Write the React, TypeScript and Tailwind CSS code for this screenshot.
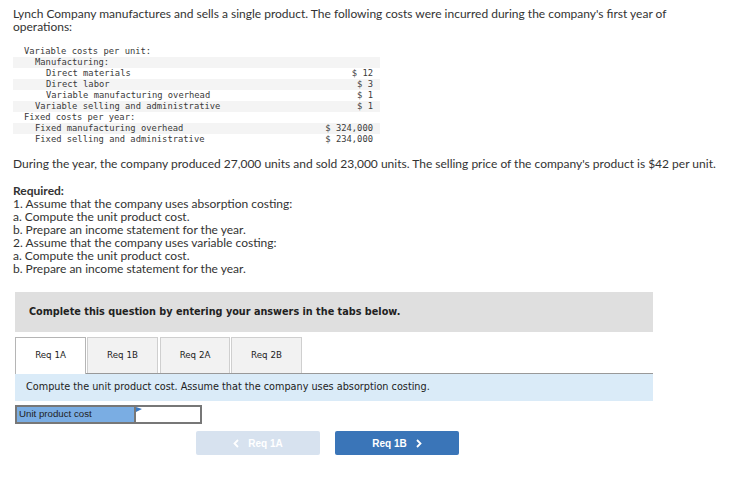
import React from "react";

const rows: { label: string; indent: number; value?: string; shade: boolean }[] = [
  { label: "Variable costs per unit:", indent: 0, shade: false },
  { label: "Manufacturing:", indent: 1, shade: true },
  { label: "Direct materials", indent: 2, value: "$ 12", shade: false },
  { label: "Direct labor", indent: 2, value: "$ 3", shade: true },
  { label: "Variable manufacturing overhead", indent: 2, value: "$ 1", shade: false },
  { label: "Variable selling and administrative", indent: 1, value: "$ 1", shade: true },
  { label: "Fixed costs per year:", indent: 0, shade: false },
  { label: "Fixed manufacturing overhead", indent: 1, value: "$ 324,000", shade: true },
  { label: "Fixed selling and administrative", indent: 1, value: "$ 234,000", shade: false },
];

const indentClass = ["pl-[11px]", "pl-[22px]", "pl-[33px]"];

export default function App() {
  return (
    <div className="w-[737px] h-[485px] bg-white overflow-hidden text-[#333] font-['Lato',sans-serif]">
      <div className="pl-[13px] pt-[7px]">
        <p className="text-[12px] leading-[13px]">
          Lynch Company manufactures and sells a single product. The following costs were incurred during the company's first year of
          <br />
          operations:
        </p>

        <div className="mt-[13px] w-[367px] font-['DejaVu_Sans_Mono',monospace] text-[8.8px] leading-[11px] text-[#3a3a3a]">
          {rows.map((r, i) => (
            <div
              key={i}
              className={`flex h-[11px] justify-between pr-[7px] ${r.shade ? "bg-[#f4f4f4]" : ""}`}
            >
              <span className={indentClass[r.indent]}>{r.label}</span>
              {r.value && <span>{r.value}</span>}
            </div>
          ))}
        </div>

        <p className="mt-[12px] text-[12px] leading-[13px]">
          During the year, the company produced 27,000 units and sold 23,000 units. The selling price of the company's product is $42 per unit.
        </p>

        <div className="mt-[14px] text-[12px] leading-[13px]">
          <p className="font-bold">Required:</p>
          <p>1. Assume that the company uses absorption costing:</p>
          <p>a. Compute the unit product cost.</p>
          <p>b. Prepare an income statement for the year.</p>
          <p>2. Assume that the company uses variable costing:</p>
          <p>a. Compute the unit product cost.</p>
          <p>b. Prepare an income statement for the year.</p>
        </div>
      </div>

      <div className="ml-[15px] mt-[17px] w-[638px]">
        <div className="flex h-[40px] items-center bg-[#dfdfdf] pl-[14px] font-['DejaVu_Sans',sans-serif] text-[9.7px] font-bold text-[#222]">
          Complete this question by entering your answers in the tabs below.
        </div>

        <div className="mt-[5px] flex h-[37px] items-end border-b border-[#999]">
          <div className="-mb-px flex h-[37px] w-[71px] items-center justify-center border border-b-0 border-[#b5b5b5] bg-white font-['DejaVu_Sans',sans-serif] text-[8.7px] text-[#222]">
            Req 1A
          </div>
          <div className="ml-px flex h-[36px] w-[71px] items-center justify-center border border-b-0 border-[#cfcfcf] bg-[#f2f2f2] font-['DejaVu_Sans',sans-serif] text-[8.7px] text-[#222]">
            Req 1B
          </div>
          <div className="ml-[2px] flex h-[36px] w-[70px] items-center justify-center border border-b-0 border-[#cfcfcf] bg-[#f2f2f2] font-['DejaVu_Sans',sans-serif] text-[8.7px] text-[#222]">
            Req 2A
          </div>
          <div className="ml-px flex h-[36px] w-[71px] items-center justify-center border border-b-0 border-[#cfcfcf] bg-[#f2f2f2] font-['DejaVu_Sans',sans-serif] text-[8.7px] text-[#222]">
            Req 2B
          </div>
        </div>

        <div className="flex h-[27px] items-center bg-[#daebf8] pl-[11px] font-['DejaVu_Sans',sans-serif] text-[9.7px] text-[#222]">
          Compute the unit product cost. Assume that the company uses absorption costing.
        </div>

        <div className="mt-[4px] flex h-[19px] w-[187px] border-2 border-[#777]">
          <div className="flex w-[119px] items-center border-r-2 border-[#777] bg-[#7aade3] pl-[2px] font-['Liberation_Sans',Arial,sans-serif] text-[9.7px] text-[#222]">
            Unit product cost
          </div>
          <div className="relative flex-1 bg-white">
            <svg className="absolute left-0 top-0" width="6" height="5" viewBox="0 0 6 5">
              <polygon points="0,0 6,2 0,5" fill="#3b78c0" />
            </svg>
          </div>
        </div>

        <div className="mt-[7px] flex gap-[15px] pl-[181px]">
          <div className="flex h-[24px] w-[124px] items-center justify-center gap-[9px] rounded-[2px] bg-[#d7e2ef] font-['Liberation_Sans',Arial,sans-serif] text-[10px] font-bold text-white">
            <svg width="6" height="9" viewBox="0 0 6 9">
              <polyline points="5,1 1.5,4.5 5,8" fill="none" stroke="white" strokeWidth="1.8" />
            </svg>
            <span>Req 1A</span>
          </div>
          <div className="flex h-[24px] w-[124px] items-center justify-center gap-[9px] rounded-[2px] bg-[#3a75b8] font-['Liberation_Sans',Arial,sans-serif] text-[10px] font-bold text-white">
            <span>Req 1B</span>
            <svg width="6" height="9" viewBox="0 0 6 9">
              <polyline points="1,1 4.5,4.5 1,8" fill="none" stroke="white" strokeWidth="1.8" />
            </svg>
          </div>
        </div>
      </div>
    </div>
  );
}
